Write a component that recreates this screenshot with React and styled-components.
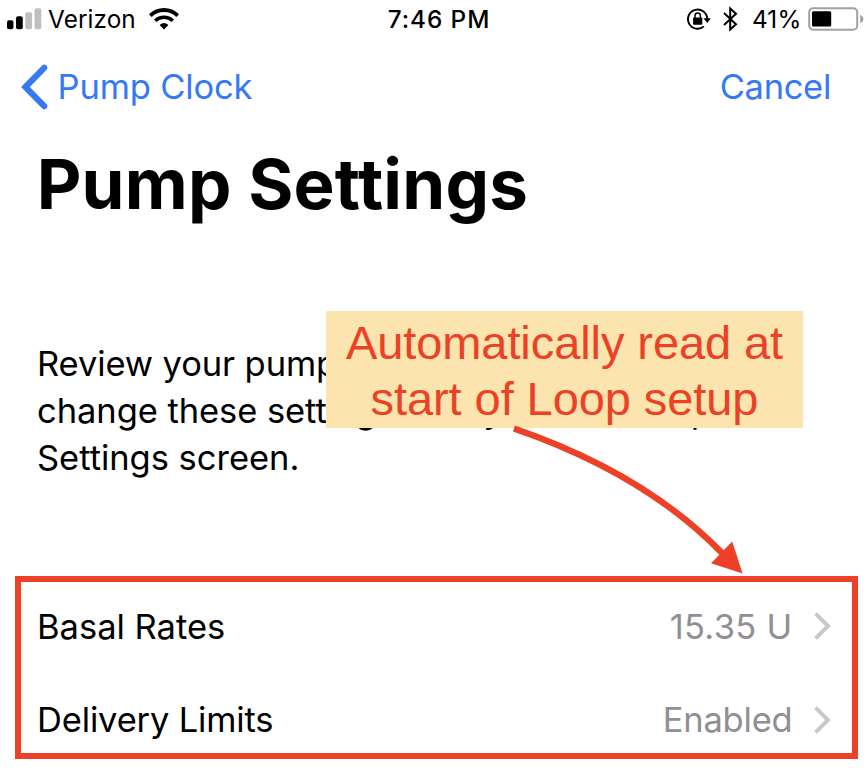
import React from "react";
import styled, { createGlobalStyle } from "styled-components";

const BLUE = "#3579f7";
const RED = "#ec4126";

const GlobalStyle = createGlobalStyle`
  * { box-sizing: border-box; }
  body { margin: 0; background: #fff; overflow: hidden; }
  svg { display: block; flex: none; }
`;

const Screen = styled.div`
  position: relative;
  width: 868px;
  height: 768px;
  overflow: hidden;
  background: #fff;
  color: #000;
  font-family: Inter, "Liberation Sans", sans-serif;
`;

const StatusBar = styled.header`
  display: grid;
  grid-template-columns: 1fr auto 1fr;
  align-items: center;
  height: 38px;
  padding: 0 4px 0 7px;
`;

const StatusGroup = styled.div`
  display: flex;
  align-items: center;
  justify-content: ${(p) => (p.$end ? "flex-end" : "flex-start")};

  svg { margin-bottom: 1px; }
`;

const StatusText = styled.span`
  font-size: 24.3px;
  line-height: 38px;
  font-weight: ${(p) => p.$weight || 400};
  letter-spacing: ${(p) => p.$tracking || 0}px;
  margin: 0 ${(p) => p.$right || 0}px 0 ${(p) => p.$left || 0}px;
  white-space: nowrap;
`;

const StatusIcon = styled.span`
  display: flex;
  margin-left: 12px;
`;

const NavBar = styled.nav`
  display: flex;
  align-items: center;
  justify-content: space-between;
  height: 97px;
  padding: 0 37px 0 21px;
`;

const NavButton = styled.button`
  display: flex;
  align-items: center;
  gap: 9.5px;
  padding: 0;
  border: 0;
  background: none;
  color: ${BLUE};
  font: 400 34.5px/44px Inter, "Liberation Sans", sans-serif;
  letter-spacing: ${(p) => p.$tracking}px;
`;

const Title = styled.h1`
  margin: 0;
  padding-left: 36.7px;
  font-size: 69px;
  line-height: 98px;
  font-weight: 700;
  letter-spacing: 0.2px;
  font-variant-ligatures: none;
`;

const Intro = styled.p`
  margin: 108px 0 0;
  padding-left: 37px;
  font-size: 34.5px;
  line-height: 46.8px;
  white-space: nowrap;
`;

const IntroLine = styled.span`
  display: block;
  letter-spacing: ${(p) => p.$tracking}px;
`;

const List = styled.ul`
  margin: 98px 0 0;
  padding: 0;
  list-style: none;
`;

const Row = styled.li`
  display: flex;
  align-items: center;
  height: 93.5px;
  padding: 0 37px;
  font-size: 34.5px;
`;

const RowLabel = styled.span`
  flex: 1;
  letter-spacing: ${(p) => p.$tracking}px;
`;

const RowValue = styled.span`
  color: #8f8f94;
  margin-right: 21.5px;
  letter-spacing: ${(p) => p.$tracking}px;
`;

const Callout = styled.aside`
  position: absolute;
  left: 326px;
  top: 311px;
  width: 477px;
  height: 117.4px;
  padding-top: 4px;
  background: #fbe4ad;
  color: ${RED};
  font: 400 47px/56px "Liberation Sans", Arial, sans-serif;
  text-align: center;
  white-space: nowrap;
`;

const CalloutLine = styled.div`
  letter-spacing: -0.08px;
`;

const Highlight = styled.div`
  position: absolute;
  left: 15.4px;
  top: 576px;
  width: 842.4px;
  height: 182.8px;
  border: 6px solid ${RED};
`;

const ArrowLayer = styled.svg`
  position: absolute;
  left: 500px;
  top: 420px;
`;

const Signal = () => (
  <svg width="35" height="22" viewBox="0 0 35 22">
    <rect x="0" y="12.3" width="6.4" height="9" rx="2" />
    <rect x="9" y="8.3" width="6.8" height="13" rx="2" />
    <rect x="18.3" y="4.3" width="6.8" height="17" rx="2" fill="#bfbfbf" />
    <rect x="27.5" y="0.3" width="6.8" height="21" rx="2" fill="#bfbfbf" />
  </svg>
);

const Wifi = () => (
  <svg width="30" height="22" viewBox="0 0 30 22" fill="none" stroke="#000">
    <path d="M1.3 7.6A19.6 19.6 0 0 1 28.7 7.6" strokeWidth="3.9" />
    <path d="M6.2 12.8A12.6 12.6 0 0 1 23.8 12.8" strokeWidth="3.6" />
    <path d="M15 21.4L10.6 17.1Q15 13.1 19.4 17.1Z" fill="#000" stroke="none" />
  </svg>
);

const RotationLock = () => (
  <svg width="24" height="22" viewBox="0 0 24 22">
    <path d="M16.9 18.4A9.6 9.6 0 1 1 20.2 11" fill="none" stroke="#000" strokeWidth="1.9" />
    <path d="M16.4 10.3H23.9L20.2 15Z" />
    <rect x="6.1" y="9.4" width="9.2" height="7.3" rx="0.8" />
    <path d="M8 10V7.8A2.7 2.7 0 0 1 13.4 7.8V10" fill="none" stroke="#000" strokeWidth="1.5" />
  </svg>
);

const Bluetooth = () => (
  <svg width="15" height="26" viewBox="0 0 15 26" fill="none" stroke="#000" strokeWidth="2">
    <path d="M1 7L13 18.3L7.2 23.6V2.4L13 7.7L1 19" />
  </svg>
);

const Battery = () => (
  <svg width="56" height="24" viewBox="0 0 56 24">
    <rect x="1.2" y="1.2" width="48" height="21.6" rx="4" fill="none" stroke="#a1a1a1" strokeWidth="2" />
    <rect x="4" y="4.2" width="19.2" height="15.4" rx="1.5" />
    <path d="M52.2 8Q55.4 9.2 55.4 12T52.2 16Z" fill="#a1a1a1" />
  </svg>
);

const BackChevron = () => (
  <svg width="27" height="46" viewBox="0 0 27 46">
    <path d="M23.2 3.8L4.4 23L23.2 42.2" fill="none" stroke={BLUE} strokeWidth="6.2" strokeLinecap="round" strokeLinejoin="miter" />
  </svg>
);

const Disclosure = () => (
  <svg width="17" height="28" viewBox="0 0 17 28">
    <path d="M1.6 1.6L14 14L1.6 26.4" fill="none" stroke="#c7c7cc" strokeWidth="3.9" />
  </svg>
);

const rows = [
  { label: "Basal Rates", value: "15.35 U", labelTracking: 0, valueTracking: 0.3 },
  { label: "Delivery Limits", value: "Enabled", labelTracking: -0.16, valueTracking: -0.2 },
];

export default function App() {
  return (
    <Screen>
      <GlobalStyle />
      <StatusBar>
        <StatusGroup>
          <Signal />
          <StatusText $left={6} $right={13} $tracking={0.1}>Verizon</StatusText>
          <Wifi />
        </StatusGroup>
        <StatusText $weight={500} $left={7} $tracking={0.95}>7:46 PM</StatusText>
        <StatusGroup $end>
          <RotationLock />
          <StatusIcon><Bluetooth /></StatusIcon>
          <StatusText $left={14} $right={6.5} $tracking={0.2}>41%</StatusText>
          <Battery />
        </StatusGroup>
      </StatusBar>

      <NavBar>
        <NavButton $tracking={-0.15}>
          <BackChevron />
          Pump Clock
        </NavButton>
        <NavButton $tracking={-0.3}>Cancel</NavButton>
      </NavBar>

      <main>
        <Title>Pump Settings</Title>
        <Intro>
          <IntroLine $tracking={-0.1}>Review your pump settings below. You can</IntroLine>
          <IntroLine $tracking={-0.06}>change these settings at any time in Loop’s</IntroLine>
          <IntroLine $tracking={-0.02}>Settings screen.</IntroLine>
        </Intro>
        <List>
          {rows.map((row) => (
            <Row key={row.label}>
              <RowLabel $tracking={row.labelTracking}>{row.label}</RowLabel>
              <RowValue $tracking={row.valueTracking}>{row.value}</RowValue>
              <Disclosure />
            </Row>
          ))}
        </List>
      </main>

      <Callout>
        <CalloutLine>Automatically read at</CalloutLine>
        <CalloutLine>start of Loop setup</CalloutLine>
      </Callout>
      <Highlight />
      <ArrowLayer width="250" height="160" viewBox="500 420 250 160">
        <path d="M514 428.5Q646 474 723 554" fill="none" stroke={RED} strokeWidth="6.3" />
        <path d="M742.6 573.6L711 563.2L732.2 541.5Z" fill={RED} />
      </ArrowLayer>
    </Screen>
  );
}
